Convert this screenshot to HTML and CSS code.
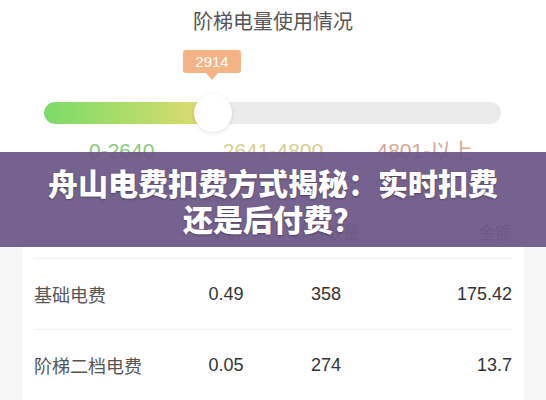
FILE: index.html
```html
<!DOCTYPE html>
<html lang="zh-CN">
<head>
    <meta charset="UTF-8">
    <meta name="viewport" content="width=device-width, initial-scale=1.0">
    <title>舟山电费扣费方式揭秘</title>
    <link rel="stylesheet" href="styles.css">
</head>
<body>
    <!-- 阶梯电量 -->
    <section class="usage">
        <h2 class="usage-title">阶梯电量使用情况</h2>
        <div class="slider">
            <div class="bubble">2914</div>
            <div class="track">
                <div class="fill" style="width: 169px;"></div>
            </div>
            <div class="thumb"></div>
        </div>
        <div class="levels">
            <span class="level-1">0-2640</span>
            <span class="level-2">2641-4800</span>
            <span class="level-3">4801-以上</span>
        </div>
    </section>

    <!-- 电费明细 -->
    <section class="detail">
        <div class="card">
            <div class="row head">
                <span>项目</span>
                <span class="center">单价</span>
                <span class="center">计费数量</span>
                <span class="right">金额</span>
            </div>
            <div class="row">
                <span>基础电费</span>
                <span class="center num">0.49</span>
                <span class="center num">358</span>
                <span class="right num">175.42</span>
            </div>
            <div class="row">
                <span>阶梯二档电费</span>
                <span class="center num">0.05</span>
                <span class="center num">274</span>
                <span class="right num">13.7</span>
            </div>
        </div>
    </section>

    <!-- 标题横幅 -->
    <div class="banner">
        <h1>舟山电费扣费方式揭秘：实时扣费<br>还是后付费？</h1>
    </div>
</body>
</html>
```

FILE: styles.css
```css
/* 基础 */
body {
    margin: 0;
    background-color: #f6f6f6;
    font-family: "Liberation Sans", "Noto Sans CJK SC", sans-serif;
    color: #333;
    overflow: hidden;
}

/* 阶梯电量部分 */
.usage {
    background-color: #ffffff;
    height: 205px;
    padding-top: 10px;
    box-sizing: border-box;
}

.usage-title {
    margin: 0;
    font-size: 20px;
    line-height: 24px;
    font-weight: normal;
    text-align: center;
    color: #555;
}

.slider {
    position: relative;
    margin: 68px 45px 0 44px;
}

.track {
    height: 22px;
    border-radius: 11px;
    background-color: #ebebeb;
    overflow: hidden;
}

.fill {
    height: 100%;
    border-radius: 11px 0 0 11px;
    background: linear-gradient(90deg, #7cdb69 0%, #a9dc6a 45%, #e4da70 100%);
}

.thumb {
    position: absolute;
    left: 150px;
    top: -8px;
    width: 38px;
    height: 38px;
    border-radius: 50%;
    background-color: #ffffff;
    box-shadow: 0 1px 4px rgba(0, 0, 0, 0.12);
}

/* 气泡提示 */
.bubble {
    position: absolute;
    left: 139px;
    top: -52px;
    width: 58px;
    height: 23px;
    line-height: 23px;
    border-radius: 3px;
    background-color: #f5b486;
    color: #ffffff;
    font-size: 15px;
    text-align: center;
}
.bubble::after {
    content: "";
    position: absolute;
    left: 23px;
    bottom: -7px;
    border-width: 7px 6px 0 6px;
    border-style: solid;
    border-color: #f5b486 transparent transparent transparent;
}

.levels {
    display: grid;
    grid-template-columns: repeat(3, 1fr);
    margin: 15px 46px 0;
    font-size: 21px;
    line-height: 24px;
    text-align: center;
}
.level-1 { color: #8cc97c; }
.level-2 { color: #d7cf8f; }
.level-3 { color: #d6a597; }

/* 明细卡片 */
.detail {
    padding: 0 22px;
}

.card {
    background-color: #ffffff;
    padding: 0 12px;
}

.row {
    display: grid;
    grid-template-columns: 140px 104px 96px 1fr;
    align-items: center;
    height: 70px;
    border-top: 1px solid #f1f1f1;
    font-size: 18px;
    color: #555;
}
.row.head {
    height: 53px;
    border-top: none;
    font-size: 17px;
    color: #888;
}
.row.head span:first-child {
    visibility: hidden;
}

.center { text-align: center; }
.right { text-align: right; }
.num { color: #333; }

/* 标题横幅 */
.banner {
    position: absolute;
    left: 0;
    top: 152px;
    width: 100%;
    height: 95px;
    display: flex;
    align-items: center;
    justify-content: center;
    background-color: rgba(108, 86, 133, 0.93);
}

.banner h1 {
    margin: 0;
    font-family: "Noto Sans CJK SC", sans-serif;
    font-size: 30px;
    line-height: 36px;
    font-weight: 900;
    color: #ffffff;
    text-align: center;
    text-shadow: 0 1px 2px rgba(0, 0, 0, 0.35);
}
```
